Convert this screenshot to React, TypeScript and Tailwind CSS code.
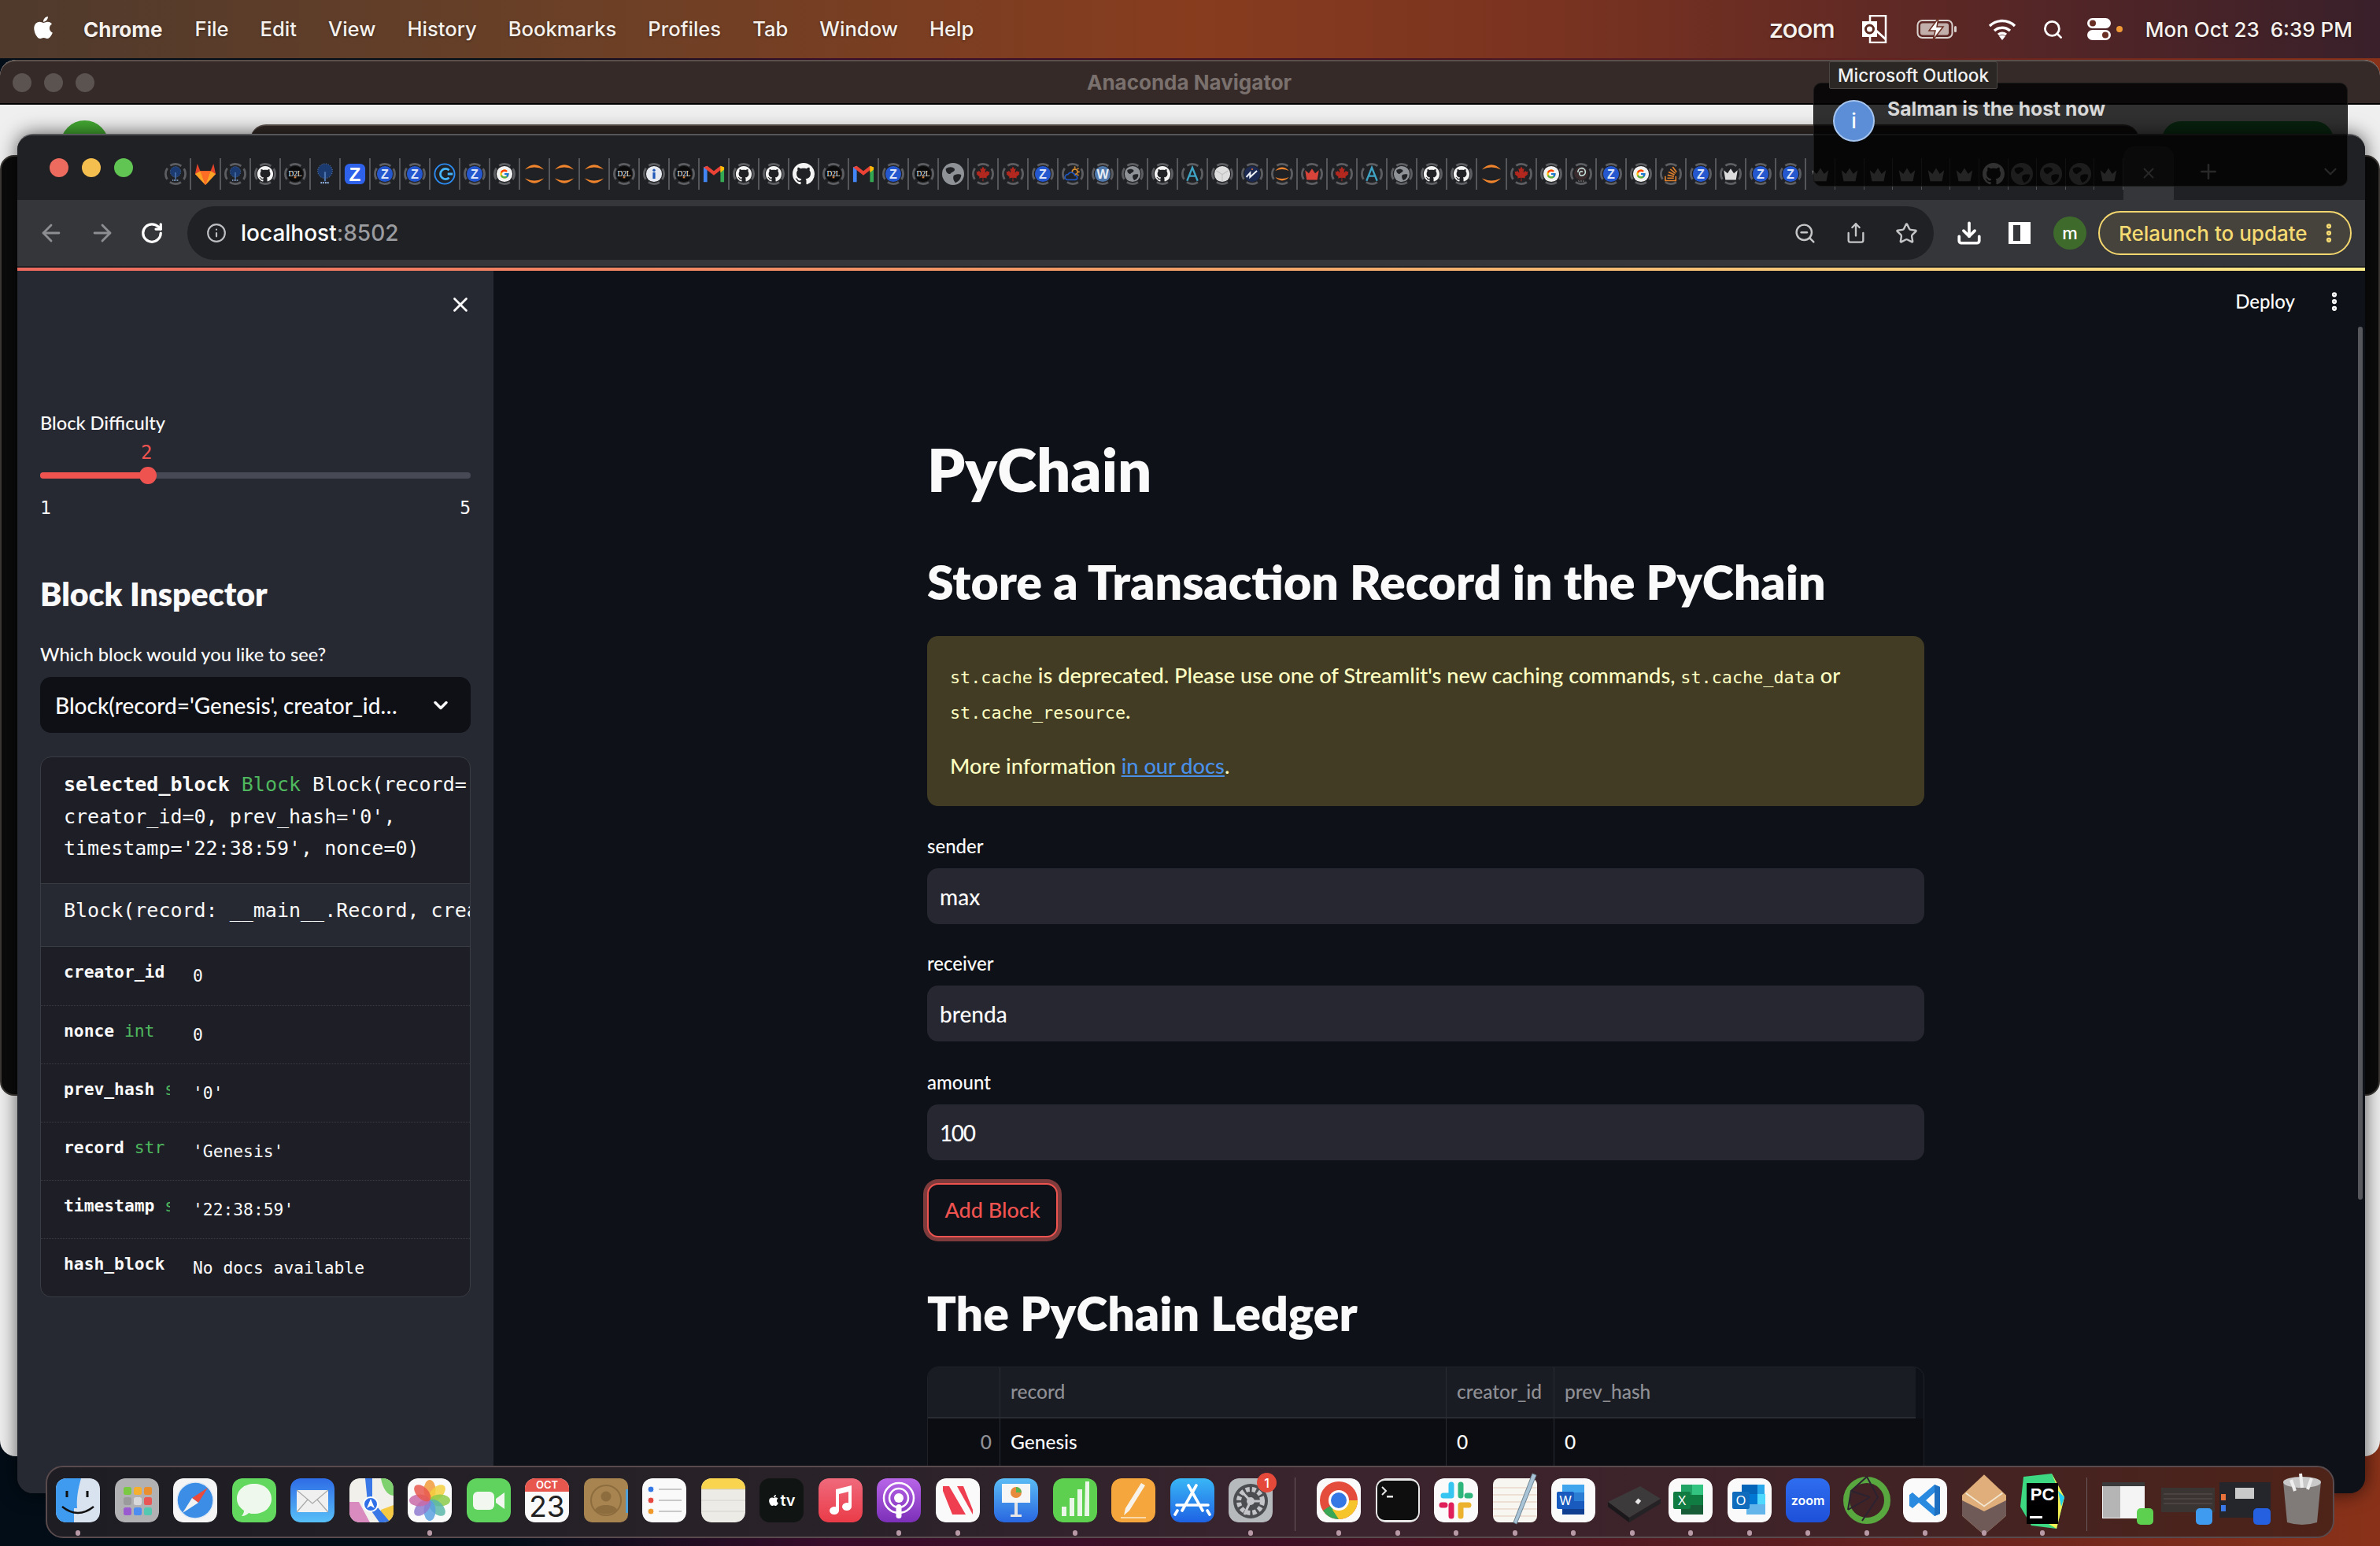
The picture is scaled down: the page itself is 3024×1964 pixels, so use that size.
import { FaApple, FaCanadianMapleLeaf } from "react-icons/fa";
import { FcGoogle } from "react-icons/fc";
import { SiStackoverflow } from "react-icons/si";
import {
  ArrowLeft,
  ArrowRight,
  ChevronDown,
  Download,
  EllipsisVertical,
  Info,
  Plus,
  RotateCw,
  Search,
  Share,
  Star,
  X,
  ZoomOut,
} from "lucide-react";

const GITHUB =
  "M8 0C3.58 0 0 3.58 0 8c0 3.54 2.29 6.53 5.47 7.59.4.07.55-.17.55-.38 0-.19-.01-.82-.01-1.49-2.01.37-2.53-.49-2.69-.94-.09-.23-.48-.94-.82-1.13-.28-.15-.68-.52-.01-.53.63-.01 1.08.58 1.23.82.72 1.21 1.87.87 2.33.66.07-.52.28-.87.51-1.07-1.78-.2-3.64-.89-3.64-3.95 0-.87.31-1.59.82-2.15-.08-.2-.36-1.02.08-2.12 0 0 .67-.21 2.2.82.64-.18 1.32-.27 2-.27.68 0 1.36.09 2 .27 1.53-1.04 2.2-.82 2.2-.82.44 1.1.16 1.92.08 2.12.51.56.82 1.27.82 2.15 0 3.07-1.87 3.75-3.65 3.95.29.25.54.73.54 1.48 0 1.07-.01 1.93-.01 2.2 0 .21.15.46.55.38A8.013 8.013 0 0016 8c0-4.42-3.58-8-8-8z";

const TABS =
  "tree* gitlab tree* github* d2l* tree zbig z* z* cal z* google* arcs arcs arcs d2l* info* d2l* gmail github* github* github d2l* gmail z* d2l* globe maple* maple* z* weather* w* globe* github* a* cube* n* arcs* crown* maple* a* globe* github* github* arcs maple* google* spiral* z* google* so* z* crownw* z* z*".split(
    " "
  );
const DIM_TABS = "crownd crownd crownd crownd crownd crownd github globe globe globe crownd".split(" ");

function FavShape({ kind }: { kind: string }) {
  switch (kind) {
    case "tree":
      return (
        <g>
          <circle cx="15" cy="11" r="10" fill="#1b3a70" />
          <circle cx="15" cy="11" r="10" fill="none" stroke="#6f97cf" strokeDasharray="1 2" />
          <path d="M15 12v13" stroke="#4a72ad" strokeWidth="2.4" />
          <path d="M9 27h12" stroke="#8fb0dc" strokeWidth="2.4" strokeDasharray="2 1" />
        </g>
      );
    case "gitlab":
      return (
        <g>
          <path d="M4 1l4 10h14l4-10 3 14-14 15L1 15z" fill="#e24329" />
          <path d="M8 11h14l-7 19z" fill="#fc6d26" />
          <path d="M1 15l14 15-7-19zM29 15L15 30l7-19z" fill="#fca326" />
        </g>
      );
    case "github":
      return <path d={GITHUB} transform="scale(1.875)" fill="#f4f4f4" />;
    case "d2l":
      return (
        <g>
          <circle cx="15" cy="15" r="15" fill="#0b0b0b" />
          <text x="15" y="20" textAnchor="middle" fontSize="14" fill="#f2f2f2" fontFamily="Liberation Serif, serif">
            D2L
          </text>
          <rect x="13" y="20" width="4" height="3" fill="#d07a35" />
        </g>
      );
    case "z":
      return (
        <g>
          <circle cx="15" cy="15" r="15" fill="#2557cf" />
          <text x="15" y="24" textAnchor="middle" fontSize="24" fontWeight="700" fill="#dfe6f7" fontFamily="Liberation Sans, sans-serif">
            Z
          </text>
        </g>
      );
    case "zbig":
      return (
        <g>
          <rect x="1" y="1" width="28" height="28" rx="7" fill="#2f62ea" />
          <text x="15" y="25" textAnchor="middle" fontSize="26" fontWeight="700" fill="#fff" fontFamily="Liberation Sans, sans-serif">
            Z
          </text>
        </g>
      );
    case "cal":
      return (
        <g fill="none" stroke="#2c8cf4">
          <circle cx="15" cy="15" r="13.5" strokeWidth="2" />
          <path d="M21 10a7 7 0 1 0 0 10M19 15h7" strokeWidth="3" stroke="#45b4fa" />
        </g>
      );
    case "google":
      return (
        <g>
          <circle cx="15" cy="15" r="15" fill="#f1f1f1" />
          <FcGoogle x={5} y={5} size={20} />
        </g>
      );
    case "arcs":
      return <path d="M2 9Q15-4 28 9 15 3 2 9zM2 21q13 6 26 0Q15 34 2 21z" fill="#f0852d" />;
    case "info":
      return (
        <g>
          <circle cx="15" cy="15" r="15" fill="#e6e9f0" />
          <circle cx="15" cy="8" r="2.6" fill="#1f57b8" />
          <rect x="12.6" y="12" width="4.8" height="12" fill="#1f57b8" />
        </g>
      );
    case "gmail":
      return (
        <g>
          <path d="M1 6l5-2v22H1z" fill="#4285f4" />
          <path d="M24 4l5 2v20h-5z" fill="#34a853" />
          <path d="M1 6l14 11L29 6l-5-2-9 7-9-7z" fill="#ea4335" />
          <path d="M24 4l5 2v3l-5 4z" fill="#fbbc04" />
        </g>
      );
    case "globe":
      return (
        <g>
          <circle cx="15" cy="15" r="15" fill="#8f9398" />
          <path d="M5 8c4-3 9-3 12 0 1 4-4 4-6 7-3 0-6-2-6-7zM16 17c4-2 8-2 10-1 0 5-3 9-8 11-2-3-4-6-2-10z" fill="#212226" />
        </g>
      );
    case "maple":
      return <FaCanadianMapleLeaf x={1} y={1} size={28} color="#b2281f" />;
    case "weather":
      return (
        <g fill="none" strokeWidth="2.5">
          <circle cx="19" cy="11" r="5" stroke="#e09230" />
          <path d="M19 1v3M28 11h-3M26 4l-2 2M26 18l-2-2" stroke="#e09230" />
          <path d="M5 26a5 5 0 0 1 1-10 7 7 0 0 1 13 2 4 4 0 0 1 1 8z" stroke="#1e56c0" fill="#202124" />
        </g>
      );
    case "w":
      return (
        <g>
          <circle cx="15" cy="15" r="15" fill="#5179ac" />
          <text x="15" y="24" textAnchor="middle" fontSize="24" fontWeight="700" fill="#e8eef6" fontFamily="Liberation Sans, sans-serif">
            W
          </text>
        </g>
      );
    case "a":
      return <path d="M5 28L15 3l10 25M9 19h12" fill="none" stroke="#3fa3c4" strokeWidth="3.5" />;
    case "cube":
      return (
        <g>
          <circle cx="15" cy="15" r="15" fill="#dedede" />
          <path d="M15 16L4 9M15 16l11-7M15 16v13" stroke="#bdbdbd" strokeWidth="1.5" />
        </g>
      );
    case "n":
      return (
        <g>
          <circle cx="15" cy="15" r="15" fill="#1c2a52" />
          <path d="M4 21l7-8v8l13-12" fill="none" stroke="#eef1f8" strokeWidth="3" />
          <circle cx="15" cy="6" r="1.6" fill="#e9703a" />
        </g>
      );
    case "crown":
      return <path d="M2 8l7 6 6-9 6 9 7-6-3 18H5z" fill="#d8443a" />;
    case "crownw":
      return <path d="M2 8l7 6 6-9 6 9 7-6-3 18H5z" fill="#dcdcdc" />;
    case "crownd":
      return <path d="M4 10l6 5 5-8 5 8 6-5-3 15H7z" fill="#b4b4b4" />;
    case "spiral":
      return (
        <g>
          <circle cx="15" cy="14" r="13" fill="#3a2c2e" />
          <path d="M9 12a7 7 0 1 1 8 6 4 4 0 1 1 1-7" fill="none" stroke="#c6e0dc" strokeWidth="2.4" />
          <path d="M10 27l1 3M15 27v3M20 27l-1 3" stroke="#8a8a8a" strokeWidth="1.5" />
        </g>
      );
    case "so":
      return <SiStackoverflow x={1} y={1} size={28} color="#e0802c" />;
    default:
      return null;
  }
}

function Favicon({ name }: { name: string }) {
  const ring = name.endsWith("*");
  const kind = ring ? name.slice(0, -1) : name;
  return (
    <svg width="28" height="30" viewBox="0 0 30 30">
      {ring ? (
        <>
          <circle cx="15" cy="15" r="13.5" fill="none" stroke="#5d5e62" strokeWidth="3" strokeDasharray="16 5.2" strokeDashoffset="8" />
          <g transform="translate(15 15) scale(.72) translate(-15 -15)">
            <FavShape kind={kind} />
          </g>
        </>
      ) : (
        <FavShape kind={kind} />
      )}
    </svg>
  );
}

function MenuBar() {
  const items = ["File", "Edit", "View", "History", "Bookmarks", "Profiles", "Tab", "Window", "Help"];
  return (
    <div className="relative z-10 flex h-[74px] items-center pl-[39px] pr-[35px] text-[26px] text-[#f6f1ec] [font-family:Inter,sans-serif] bg-[linear-gradient(90deg,#4f3a2c_0%,#6c4026_25%,#873c1e_50%,#7a3320_65%,#5b2725_82%,#39202a_100%)] [text-shadow:0_1px_3px_rgba(0,0,0,.45)]">
      <FaApple size={32} className="mb-1 text-white" />
      <span className="ml-[35px] font-bold">Chrome</span>
      <div className="ml-[41px] flex gap-[40px] text-[25.6px]">
        {items.map((m) => (
          <span key={m}>{m}</span>
        ))}
      </div>
      <div className="ml-auto flex items-center">
        <span className="text-[33px] font-medium tracking-[-0.03em]">zoom</span>
        <svg width="34" height="36" viewBox="0 0 34 36" className="ml-[33px]">
          <path d="M12 1h20v34H12z" fill="none" stroke="#fff" strokeWidth="2.5" />
          <rect x="2" y="8" width="19" height="20" fill="#fff" />
          <circle cx="11.5" cy="18" r="5" fill="none" stroke="#5a2a20" strokeWidth="3" />
          <path d="M20 20l12 11" stroke="#fff" strokeWidth="3" />
        </svg>
        <svg width="52" height="28" viewBox="0 0 52 28" className="ml-[37px]">
          <rect x="1.5" y="3" width="44" height="22" rx="6" fill="none" stroke="#d9d2ce" strokeWidth="2" />
          <rect x="5" y="6.5" width="36" height="15" rx="3" fill="#e4dcd8" opacity=".75" />
          <path d="M28 0L16 16h8l-3 12 13-17h-8z" fill="#fff" stroke="#6a2f24" strokeWidth="1.5" />
          <rect x="48" y="10" width="3" height="8" rx="1.5" fill="#d9d2ce" />
        </svg>
        <svg width="36" height="28" viewBox="0 0 36 28" className="ml-[39px]">
          <path d="M2 10a23 23 0 0 1 32 0M8 16a15 15 0 0 1 20 0M13 21a8 8 0 0 1 10 0" fill="none" stroke="#fff" strokeWidth="3.4" />
          <path d="M18 28l-4-5a6 6 0 0 1 8 0z" fill="#fff" />
        </svg>
        <Search size={27} strokeWidth={2.5} className="ml-[33px] text-white" />
        <svg width="32" height="30" viewBox="0 0 32 30" className="ml-[29px]">
          <rect x="1" y="1" width="30" height="13" rx="6.5" fill="#fff" />
          <circle cx="8" cy="7.5" r="4" fill="#6a2f24" />
          <rect x="1" y="16" width="30" height="13" rx="6.5" fill="#fff" />
          <circle cx="24" cy="22.5" r="4" fill="#6a2f24" />
        </svg>
        <span className="ml-[6px] h-2 w-2 rounded-full bg-[#f09a37]" />
        <span className="ml-[29px] whitespace-pre">Mon Oct 23  6:39 PM</span>
      </div>
    </div>
  );
}

function TabStrip() {
  return (
    <div className="flex h-[82px] shrink-0 bg-[#202124]">
      <div className="flex min-w-0 flex-1 rounded-br-[14px]">
        <div className="flex w-[185px] gap-[17px] pl-[41px] pt-[29px]">
          <span className="h-[24px] w-[24px] rounded-full bg-[#ec6a5e]" />
          <span className="h-[24px] w-[24px] rounded-full bg-[#f4bf4f]" />
          <span className="h-[24px] w-[24px] rounded-full bg-[#61c554]" />
        </div>
        <div className="flex pt-[29px]">
          {TABS.map((t, i) => (
            <div key={i} className="flex h-[40px] w-[38px] items-center justify-center border-r-2 border-[#55565a]">
              <Favicon name={t} />
            </div>
          ))}
          {DIM_TABS.map((t, i) => (
            <div key={i} className="flex h-[40px] w-[36.6px] items-center justify-center border-r border-[#55565a]">
              <Favicon name={t} />
            </div>
          ))}
        </div>
      </div>
      <div className="mt-[14px] flex w-[64px] items-center justify-center rounded-t-[14px] bg-[#35363a]">
        <X size={22} className="text-[#c5c6c8]" />
      </div>
      <div className="flex w-[243px] items-center justify-between pl-[29px] pr-[31px] pt-[10px]">
        <Plus size={30} className="text-[#c5c6c8]" />
        <ChevronDown size={26} className="text-[#c5c6c8]" />
      </div>
    </div>
  );
}

function Toolbar() {
  return (
    <div className="flex h-[84px] shrink-0 items-center bg-[#35363a] [font-family:Inter,sans-serif]">
      <div className="flex w-[216px] items-center gap-[31px] pl-[26px] text-[#8d8e92]">
        <ArrowLeft size={34} strokeWidth={2} />
        <ArrowRight size={34} strokeWidth={2} />
        <RotateCw size={30} strokeWidth={2.6} className="text-white" />
      </div>
      <div className="flex h-[68px] w-[2219px] items-center rounded-full bg-[#202124] pl-[24px] pr-[20px]">
        <Info size={26} className="text-[#bdbec2]" />
        <span className="ml-[18px] text-[28px] text-white">
          localhost<span className="text-[#9b9ca0]">:8502</span>
        </span>
        <div className="ml-auto flex items-center gap-[36px] text-[#c5c6c8]">
          <ZoomOut size={29} strokeWidth={2} />
          <Share size={28} strokeWidth={2} />
          <Star size={29} strokeWidth={2} />
        </div>
      </div>
      <Download size={34} strokeWidth={2.6} className="ml-[28px] text-white" />
      <svg width="28" height="28" viewBox="0 0 28 28" className="ml-[33px]">
        <rect width="28" height="28" fill="#fff" />
        <rect x="6" y="4" width="9" height="20" fill="#35363a" />
      </svg>
      <span className="ml-[29px] flex h-[42px] w-[42px] items-center justify-center rounded-full bg-[#3e6b2c] text-[22px] text-white">m</span>
      <div className="ml-[15px] flex h-[56px] w-[322px] items-center rounded-full border-2 border-[#f4d76e] bg-[#45433c] pl-[24px] pr-[12px] text-[26px] text-[#f6da72]">
        <span className="whitespace-nowrap">Relaunch to update</span>
        <EllipsisVertical size={30} strokeWidth={3} className="ml-auto" />
      </div>
    </div>
  );
}

const rows = [
  { name: "creator_id", type: "int", value: "0" },
  { name: "nonce", type: "int", value: "0" },
  { name: "prev_hash", type: "str", value: "'0'" },
  { name: "record", type: "str", value: "'Genesis'" },
  { name: "timestamp", type: "str", value: "'22:38:59'" },
  { name: "hash_block", type: "", value: "No docs available" },
];

function Sidebar() {
  return (
    <div className="flex w-[605px] shrink-0 flex-col bg-[#272932] px-[29px] text-[#fafafa]">
      <div className="flex h-[84px] items-start justify-end pt-[28px]">
        <X size={30} strokeWidth={2.2} className="mr-[-2px]" />
      </div>
      <div className="mt-[94px] flex h-[32px] items-center text-[23.6px]">Block Difficulty</div>
      <div className="mt-[9px] h-[24px] pl-[128px] text-[24px] leading-[24px] text-[#ef5350] [font-family:'DejaVu_Sans_Mono',monospace]">2</div>
      <div className="relative mt-[13px] h-[8px] rounded-full bg-[#474954]">
        <div className="h-[8px] w-[136px] rounded-full bg-[#ef5350]" />
        <span className="absolute left-[126px] top-[-7px] h-[22px] w-[22px] rounded-full bg-[#ef5350]" />
      </div>
      <div className="mt-[25px] flex h-[24px] justify-between text-[23px] leading-[24px] [font-family:'DejaVu_Sans_Mono',monospace]">
        <span>1</span>
        <span>5</span>
      </div>
      <h2 className="mt-[74px] h-[48px] text-[41px] font-extrabold leading-[48px]">Block Inspector</h2>
      <div className="mt-[37px] flex h-[32px] items-center text-[23.6px]">Which block would you like to see?</div>
      <div className="mt-[12px] flex h-[71px] items-center justify-between rounded-[14px] bg-[#0e1016] pl-[19px] pr-[24px] text-[28px]">
        <span>Block(record='Genesis', creator_id…</span>
        <ChevronDown size={28} strokeWidth={3} />
      </div>
      <div className="mt-[30px] overflow-hidden rounded-[14px] border border-[#3a3c44] bg-[#1e1f26] font-normal [font-family:'DejaVu_Sans_Mono',monospace]">
        <div className="h-[160px] overflow-hidden whitespace-pre pl-[29px] pt-[15px] text-[25px] leading-[40.5px]">
          <div>
            <b>selected_block</b> <span className="text-[#4fb85e]">Block</span> Block(record='Genesis',
          </div>
          <div>creator_id=0, prev_hash='0',</div>
          <div>timestamp='22:38:59', nonce=0)</div>
        </div>
        <div className="h-[81px] overflow-hidden whitespace-pre border-y border-[#3a3c44] bg-[#272932] pl-[29px] pt-[14px] text-[25px] leading-[40px]">
          Block(record: __main__.Record, creator_id: int, prev_hash: str = '0')
        </div>
        {rows.map((r, i) => (
          <div key={r.name} className={"flex h-[74px] pl-[29px] text-[21.3px] " + (i ? "border-t border-dotted border-[#3a3c44]" : "")}>
            <div className="mt-[16px] h-[30px] w-[135px] overflow-hidden whitespace-pre font-bold">
              {r.name} <span className="font-normal text-[#4fb85e]">{r.type}</span>
            </div>
            <div className="ml-[29px] mt-[21px] whitespace-pre">{r.value}</div>
          </div>
        ))}
      </div>
    </div>
  );
}

function Field({ label, value, mt, valueClass }: { label: string; value: string; mt: string; valueClass?: string }) {
  return (
    <div className={mt}>
      <div className="flex h-[32px] items-center text-[24px] text-[#fafafa]">{label}</div>
      <div className={"mt-[12px] flex h-[71px] items-center rounded-[14px] bg-[#262730] pl-[16px] text-[28px] text-[#fafafa] " + (valueClass ?? "")}>{value}</div>
    </div>
  );
}

const codeClass = "text-[21.8px] leading-none font-normal [font-family:'DejaVu_Sans_Mono',monospace]";

function MainPanel() {
  return (
    <div className="relative flex-1 bg-[#0e1117]">
      <div className="absolute right-[3px] top-[71px] h-[1109px] w-[6px] rounded-full bg-[#55575d]" />
      <div className="flex h-[78px] items-center justify-end pr-[24px] text-[24px] text-[#fafafa]">
        <span>Deploy</span>
        <EllipsisVertical size={30} strokeWidth={3} className="ml-[35px]" />
      </div>
      <div className="ml-[551px] w-[1267px]">
        <h1 className="mt-[134px] h-[80px] text-[76px] font-extrabold leading-[80px] text-[#fafafa]">PyChain</h1>
        <h2 className="mt-[63px] h-[80px] text-[60.8px] font-extrabold leading-[80px] text-[#fafafa]">Store a Transaction Record in the PyChain</h2>
        <div className="mt-[29px] h-[216px] rounded-[14px] bg-[#413c23] px-[29px] pt-[27px] text-[27.2px] text-[#ffffc2]">
          <div className="leading-[45px]">
            <code className={codeClass}>st.cache</code> is deprecated. Please use one of Streamlit's new caching commands,{" "}
            <code className={codeClass}>st.cache_data</code> or <code className={codeClass}>st.cache_resource</code>.
          </div>
          <div className="mt-[25px] leading-[46px]">
            More information{" "}
            <a href="#docs" className="text-[#4a90e8] underline">
              in our docs
            </a>
            .
          </div>
        </div>
        <Field mt="mt-[35px]" label="sender" value="max" />
        <Field mt="mt-[34px]" label="receiver" value="brenda" />
        <Field mt="mt-[36px]" label="amount" value="100" valueClass="tracking-[-0.05em]" />
        <button className="mt-[29px] h-[69px] w-[166px] rounded-[14px] border-2 border-[#ef5350] bg-[#0e1117] text-[27px] text-[#ef5350] shadow-[0_0_0_5px_#7f3b3b]">
          Add Block
        </button>
        <h2 className="mt-[56px] h-[80px] text-[60.8px] font-extrabold leading-[80px] text-[#fafafa]">The PyChain Ledger</h2>
        <div className="mt-[28px] overflow-hidden rounded-t-[14px] border border-[#1f2127] text-[24.5px]">
          <div className="mr-[10px] flex h-[65px] border-b-2 border-[#2a2c33] bg-[#1a1c23] text-[#8f9096]">
            <div className="w-[92px] border-r border-[#2a2c33]" />
            <div className="flex w-[567px] items-center border-r border-[#2a2c33] pl-[13px]">record</div>
            <div className="flex w-[137px] items-center border-r border-[#2a2c33] pl-[13px]">creator_id</div>
            <div className="flex flex-1 items-center pl-[13px]">prev_hash</div>
          </div>
          <div className="flex h-[95px] bg-[#0b0d12] text-[#fafafa]">
            <div className="flex w-[92px] items-start justify-end border-r border-[#2a2c33] pr-[10px] pt-[12px] text-[#8f9096]">0</div>
            <div className="w-[567px] border-r border-[#2a2c33] pl-[13px] pt-[12px]">Genesis</div>
            <div className="w-[137px] border-r border-[#2a2c33] pl-[13px] pt-[12px]">0</div>
            <div className="flex-1 pl-[13px] pt-[12px]">0</div>
          </div>
        </div>
      </div>
    </div>
  );
}

function DockGlyph({ name }: { name: string }) {
  switch (name) {
    case "finder":
      return (
        <svg viewBox="0 0 56 56">
          <rect width="56" height="56" rx="12" fill="#d9e2ef" />
          <path d="M12 0h20c-4 14-6 26-5 38h-4v18H12Q0 56 0 44V12Q0 0 12 0z" fill="#3f9bef" />
          <path d="M14 16v8M40 16v8" stroke="#111" strokeWidth="3" />
          <path d="M8 36q20 16 40 0" fill="none" stroke="#111" strokeWidth="2.5" />
        </svg>
      );
    case "launchpad":
      return (
        <svg viewBox="0 0 56 56">
          <rect width="56" height="56" rx="12" fill="#b1b1b3" />
          {["#7ac943", "#f5b02f", "#e98f2f", "#9a9a9c", "#d8d8da", "#e85656", "#9b5bd0", "#4d8cf0", "#54c8b0"].map((c, i) => (
            <rect key={i} x={11 + (i % 3) * 13} y={11 + Math.floor(i / 3) * 13} width="10" height="10" rx="2.5" fill={c} />
          ))}
        </svg>
      );
    case "safari":
      return (
        <svg viewBox="0 0 56 56">
          <rect width="56" height="56" rx="12" fill="#f5f5f5" />
          <circle cx="28" cy="28" r="23" fill="#3b8de5" stroke="#dfe9f5" strokeWidth="1.5" />
          <path d="M44 12L24 25l8 6z" fill="#ea4b3c" />
          <path d="M12 44l12-19 8 6z" fill="#f2f2f2" />
        </svg>
      );
    case "messages":
      return (
        <svg viewBox="0 0 56 56">
          <rect width="56" height="56" rx="12" fill="#63d85f" />
          <path d="M28 8c13 0 22 8 22 19s-9 19-22 19c-3 0-5 0-7-1-2 2-5 4-9 4 2-2 3-5 3-7C9 38 6 33 6 27 6 16 15 8 28 8z" fill="#eef8ec" transform="translate(0 -1)" />
        </svg>
      );
    case "mail":
      return (
        <svg viewBox="0 0 56 56">
          <defs>
            <linearGradient id="mailg" x1="0" y1="0" x2="0" y2="1">
              <stop stopColor="#2e6ce6" />
              <stop offset="1" stopColor="#58c0f8" />
            </linearGradient>
          </defs>
          <rect width="56" height="56" rx="12" fill="url(#mailg)" />
          <rect x="8" y="15" width="40" height="28" rx="2" fill="#f0f0f0" />
          <path d="M8 15l20 17 20-17M8 43l14-16M48 43L34 27" fill="none" stroke="#a9a9a9" strokeWidth="1.2" />
        </svg>
      );
    case "maps":
      return (
        <svg viewBox="0 0 56 56">
          <rect width="56" height="56" rx="12" fill="#f2f0ea" />
          <path d="M0 30h12l14 26H12Q0 56 0 44z" fill="#d98bc0" />
          <path d="M40 40l16-6v10q0 12-12 12h-4z" fill="#f6c944" />
          <path d="M40 0h4q12 0 12 12v10C48 22 42 12 40 0z" fill="#7fd16f" />
          <path d="M20 0h9v30h-6zM30 30L52 56H38L24 36z" fill="#3a78e8" />
          <circle cx="27" cy="33" r="9" fill="#2f6fe8" stroke="#fff" strokeWidth="2" />
          <path d="M27 26l5 12-5-3-5 3z" fill="#fff" />
        </svg>
      );
    case "photos":
      return (
        <svg viewBox="0 0 56 56">
          <rect width="56" height="56" rx="12" fill="#fafafa" />
          {["#f29a38", "#f3cf3d", "#8ccb4a", "#5cb6a8", "#5aa0e0", "#8f7ad0", "#c86aa8", "#e8584e"].map((c, i) => (
            <ellipse key={i} cx="28" cy="15" rx="7.5" ry="13" fill={c} opacity=".85" transform={`rotate(${i * 45} 28 28)`} />
          ))}
        </svg>
      );
    case "facetime":
      return (
        <svg viewBox="0 0 56 56">
          <rect width="56" height="56" rx="12" fill="#5fd35d" />
          <rect x="8" y="17" width="27" height="23" rx="6" fill="#f2f7f0" />
          <path d="M37 26l11-8v21l-11-8z" fill="#f2f7f0" />
        </svg>
      );
    case "calendar":
      return (
        <div className="flex h-full flex-col bg-[#fafafa] text-center font-normal [font-family:Inter,sans-serif]">
          <div className="h-[17px] bg-[#e8574e] text-[13px] font-semibold leading-[17px] text-white">OCT</div>
          <div className="text-[37px] leading-[38px] text-[#222]">23</div>
        </div>
      );
    case "contacts":
      return (
        <svg viewBox="0 0 56 56">
          <rect width="56" height="56" rx="10" fill="#a88450" />
          <rect x="53" y="14" width="3" height="30" fill="#4fa0d8" />
          <circle cx="28" cy="28" r="19" fill="none" stroke="#8d6c3e" strokeWidth="2" />
          <circle cx="28" cy="23" r="6.5" fill="#8d6c3e" />
          <path d="M14 40c3-8 25-8 28 0-6 7-22 7-28 0z" fill="#8d6c3e" />
        </svg>
      );
    case "reminders":
      return (
        <svg viewBox="0 0 56 56">
          <rect width="56" height="56" rx="12" fill="#fafafa" />
          {[
            ["#3478e5", 14],
            ["#e6483f", 28],
            ["#f09a2c", 42],
          ].map(([c, y]) => (
            <g key={String(c)}>
              <circle cx="11" cy={Number(y)} r="4" fill={String(c)} stroke="#f8f8f8" />
              <rect x="21" y={Number(y) - 1} width="29" height="2" fill="#c9c9c9" />
            </g>
          ))}
        </svg>
      );
    case "notes":
      return (
        <svg viewBox="0 0 56 56">
          <rect width="56" height="56" rx="12" fill="#ecebe6" />
          <path d="M0 14V12Q0 0 12 0h32q12 0 12 12v2z" fill="#f9d44f" />
          <path d="M0 14h56M0 28h56M0 42h56" stroke="#d4d3cd" />
        </svg>
      );
    case "tv":
      return (
        <div className="flex h-full items-center justify-center bg-[#101412] text-[20px] font-semibold text-white [font-family:Inter,sans-serif]">
          <FaApple size={16} />
          tv
        </div>
      );
    case "music":
      return (
        <svg viewBox="0 0 56 56">
          <defs>
            <linearGradient id="musicg" x1="0" y1="0" x2="0" y2="1">
              <stop stopColor="#f06a7c" />
              <stop offset="1" stopColor="#ea3b48" />
            </linearGradient>
          </defs>
          <rect width="56" height="56" rx="12" fill="url(#musicg)" />
          <path d="M22 14l20-5v27a6 5 0 1 1-4-4.700V17l-12 3v21a6 5 0 1 1-4-4.700z" fill="#fff" />
        </svg>
      );
    case "podcasts":
      return (
        <svg viewBox="0 0 56 56">
          <defs>
            <linearGradient id="podg" x1="0" y1="0" x2="0" y2="1">
              <stop stopColor="#b865e8" />
              <stop offset="1" stopColor="#7c2fb8" />
            </linearGradient>
          </defs>
          <rect width="56" height="56" rx="12" fill="url(#podg)" />
          <circle cx="28" cy="25" r="19" fill="none" stroke="#fff" strokeWidth="2.5" />
          <circle cx="28" cy="25" r="12" fill="none" stroke="#fff" strokeWidth="2.5" />
          <circle cx="28" cy="25" r="6" fill="#fff" />
          <rect x="24.500" y="33" width="7" height="18" rx="3.500" fill="#fff" />
        </svg>
      );
    case "news":
      return (
        <svg viewBox="0 0 56 56">
          <rect width="56" height="56" rx="12" fill="#fafafa" />
          <path d="M9 10h26l12 30v6H21L9 16z" fill="#ef3e4f" />
          <path d="M17 10h10l20 36H38z" fill="#fafafa" />
        </svg>
      );
    case "keynote":
      return (
        <svg viewBox="0 0 56 56">
          <defs>
            <linearGradient id="keyg" x1="0" y1="0" x2="0" y2="1">
              <stop stopColor="#5bbcf5" />
              <stop offset="1" stopColor="#2866e0" />
            </linearGradient>
          </defs>
          <rect width="56" height="56" rx="12" fill="url(#keyg)" />
          <rect x="10" y="7" width="36" height="24" fill="#f6f6f6" />
          <circle cx="28" cy="18" r="7" fill="#e78a3c" />
          <path d="M28 18V11a7 7 0 0 1 7 7z" fill="#59b34f" />
          <path d="M26 31h4v15h-4zM21 46h14v3H21z" fill="#e6e6e6" />
        </svg>
      );
    case "numbers":
      return (
        <svg viewBox="0 0 56 56">
          <rect width="56" height="56" rx="12" fill="#5dd14f" />
          <path d="M11 36h6v12h-6zM21 25h6v23h-6zM31 14h6v34h-6zM41 4h-1 6v44h-6z" fill="#eaf6e8" />
        </svg>
      );
    case "pages":
      return (
        <svg viewBox="0 0 56 56">
          <rect width="56" height="56" rx="12" fill="#f5a63c" />
          <path d="M38 6l5 3-20 32-7 6 2-9z" fill="#f7f3ea" />
          <rect x="12" y="49" width="32" height="2" fill="#f9d9a7" />
        </svg>
      );
    case "appstore":
      return (
        <svg viewBox="0 0 56 56">
          <defs>
            <linearGradient id="appg" x1="0" y1="0" x2="0" y2="1">
              <stop stopColor="#39b6f6" />
              <stop offset="1" stopColor="#1e62e4" />
            </linearGradient>
          </defs>
          <rect width="56" height="56" rx="12" fill="url(#appg)" />
          <path d="M33 9L15 41M23 9l18 32M8 34h40M6 46l3-5M50 46l-3-5" fill="none" stroke="#fff" strokeWidth="3.6" strokeLinecap="round" />
        </svg>
      );
    case "prefs":
      return (
        <svg viewBox="0 0 56 56">
          <rect width="56" height="56" rx="12" fill="#b6babd" />
          <circle cx="28" cy="29" r="22" fill="#4b4d50" />
          <circle cx="28" cy="29" r="15" fill="none" stroke="#c3c5c8" strokeWidth="6" strokeDasharray="5 3" />
          <circle cx="28" cy="29" r="5" fill="#c3c5c8" />
          <path d="M28 29L16 16M28 29h18M28 29L20 46" stroke="#c3c5c8" strokeWidth="3" />
        </svg>
      );
    case "chrome":
      return (
        <svg viewBox="0 0 56 56">
          <rect width="56" height="56" rx="12" fill="#fafafa" />
          <circle cx="28" cy="28" r="24" fill="#e44c3c" />
          <path d="M28 28L8 41A24 24 0 0 0 28 52z" fill="#3aa757" />
          <path d="M28 28h24a24 24 0 0 1-24 24L20 40z" fill="#f6c42b" />
          <circle cx="28" cy="28" r="11.500" fill="#3478e5" stroke="#fff" strokeWidth="3" />
        </svg>
      );
    case "terminal":
      return (
        <svg viewBox="0 0 56 56">
          <rect width="56" height="56" rx="12" fill="#e8e8e8" />
          <rect x="2" y="3" width="52" height="50" rx="9" fill="#0e0e0e" />
          <path d="M8 11l5 5-5 5" fill="none" stroke="#e8e8e8" strokeWidth="2" />
          <rect x="14" y="22" width="8" height="2.500" fill="#e8e8e8" />
        </svg>
      );
    case "slack":
      return (
        <svg viewBox="0 0 56 56">
          <rect width="56" height="56" rx="12" fill="#fafafa" />
          <path d="M22 8v14H12" fill="none" stroke="#36c5f0" strokeWidth="7" strokeLinecap="round" strokeLinejoin="round" />
          <path d="M34 8v14" stroke="#2eb67d" strokeWidth="7" strokeLinecap="round" />
          <path d="M46 22h-4" stroke="#2eb67d" strokeWidth="7" strokeLinecap="round" />
          <path d="M34 48V34h10" fill="none" stroke="#ecb22e" strokeWidth="7" strokeLinecap="round" strokeLinejoin="round" />
          <path d="M22 34v14M10 34h4" stroke="#e01e5a" strokeWidth="7" strokeLinecap="round" />
        </svg>
      );
    case "textedit":
      return (
        <svg viewBox="0 0 56 56" className="overflow-visible">
          <rect width="56" height="56" rx="8" fill="#f8f6f0" />
          <path d="M0 12h56M0 21h56M0 30h56M0 39h56M0 48h56" stroke="#e2c9b8" />
          <path d="M50-6l5 2-25 62-4-2z" fill="#a9c4d6" stroke="#6c8494" />
        </svg>
      );
    case "word":
      return (
        <svg viewBox="0 0 56 56">
          <rect width="56" height="56" rx="12" fill="#fafafa" />
          <path d="M14 8h28v10H14z" fill="#41a5ee" />
          <path d="M14 18h28v11H14z" fill="#2b7cd3" />
          <path d="M14 29h28v10H14z" fill="#185abd" />
          <path d="M14 39h28v7H14z" fill="#103f91" />
          <rect x="7" y="17" width="22" height="22" rx="2" fill="#185abd" />
          <text x="18" y="34" textAnchor="middle" fontSize="16" fill="#fff" fontFamily="Liberation Sans, sans-serif">
            W
          </text>
        </svg>
      );
    case "wallet":
      return (
        <svg viewBox="0 0 56 56" className="overflow-visible">
          <path d="M-3 30L38 10l26 16-40 24z" fill="#3d3a3b" />
          <path d="M-3 30L24 50v6L-3 36z" fill="#1a181a" />
          <path d="M24 50l40-24v6L24 56z" fill="#242224" />
          <rect x="33" y="26" width="5" height="6" fill="#e8e8e8" transform="rotate(40 35 29)" />
        </svg>
      );
    case "excel":
      return (
        <svg viewBox="0 0 56 56">
          <rect width="56" height="56" rx="12" fill="#fafafa" />
          <path d="M16 8h14v13H16z" fill="#21a366" />
          <path d="M30 8h14v13H30z" fill="#33c481" />
          <path d="M16 21h28v13H16z" fill="#107c41" />
          <path d="M16 34h28v12H16z" fill="#185c37" />
          <rect x="6" y="17" width="22" height="22" rx="2" fill="#107c41" />
          <text x="17" y="34" textAnchor="middle" fontSize="16" fill="#fff" fontFamily="Liberation Sans, sans-serif">
            X
          </text>
        </svg>
      );
    case "outlook":
      return (
        <svg viewBox="0 0 56 56">
          <rect width="56" height="56" rx="12" fill="#fafafa" />
          <path d="M18 8h20v12H18z" fill="#0364b8" />
          <path d="M38 8h9v12h-9z" fill="#28a8ea" />
          <path d="M18 20h20v13H18z" fill="#0078d4" />
          <path d="M38 20h10v13H38z" fill="#50d9ff" />
          <path d="M24 33h24v13H24z" fill="#64b5ea" />
          <rect x="6" y="17" width="22" height="22" rx="2" fill="#0f6cbd" />
          <text x="17" y="34" textAnchor="middle" fontSize="16" fill="#fff" fontFamily="Liberation Sans, sans-serif">
            O
          </text>
        </svg>
      );
    case "zoom":
      return (
        <div className="flex h-full items-center justify-center bg-[linear-gradient(#2e6df0,#1e50d8)] text-[16px] font-semibold text-white [font-family:Inter,sans-serif]">
          zoom
        </div>
      );
    case "anaconda":
      return (
        <svg viewBox="0 0 56 56" className="overflow-visible">
          <circle cx="28" cy="28" r="26" fill="none" stroke="#58a83f" strokeWidth="8" />
          <path d="M28-2L8 16 4 40M28-2l14 26-20 30M8 16l24 8M4 40l28-16" fill="none" stroke="#2c2230" strokeWidth="2" />
        </svg>
      );
    case "vscode":
      return (
        <svg viewBox="0 0 56 56">
          <rect width="56" height="56" rx="12" fill="#fafafa" />
          <path d="M40 8l7 3v34l-7 3-20-17-8 7-4-3v-14l4-3 8 7zm0 10l-11 10 11 10z" fill="#2a8ae0" />
          <path d="M40 8l7 3v34l-7 3z" fill="#1f6fc0" />
        </svg>
      );
    case "sketch":
      return (
        <svg viewBox="0 0 60 70" className="overflow-visible">
          <path d="M30-5l30 28v28L30 77 0 51V23z" fill="#dfae7a" />
          <path d="M0 30l30 15 30-15v21L30 77 0 51z" fill="#6f5a58" />
          <path d="M5 20l25 18 25-18" fill="none" stroke="#f2e7d2" strokeWidth="2" />
        </svg>
      );
    case "pycharm":
      return (
        <svg viewBox="0 0 56 64" className="overflow-visible">
          <path d="M4-2L40-6l16 30-10 40-32-4L0 36z" fill="#3cd882" />
          <path d="M40-6l16 30-10 40-10-6 12-44z" fill="#f3ee52" />
          <path d="M48 16l8 8-4 12z" fill="#21d0f0" />
          <rect x="8" y="6" width="40" height="52" fill="#000" />
          <text x="28" y="28" textAnchor="middle" fontSize="22" fontWeight="700" fill="#fff" fontFamily="Liberation Sans, sans-serif">
            PC
          </text>
          <rect x="12" y="48" width="16" height="3" fill="#fff" />
        </svg>
      );
    case "mini1":
      return (
        <svg viewBox="0 0 56 56" className="overflow-visible">
          <rect x="0" y="5" width="54" height="46" fill="#f4f4f4" />
          <rect x="0" y="5" width="54" height="5" fill="#3a3a3a" />
          <rect x="1" y="10" width="22" height="40" fill="#b5b5b5" />
          <rect x="44" y="38" width="21" height="21" rx="5" fill="#5dd14f" />
        </svg>
      );
    case "mini2":
      return (
        <svg viewBox="0 0 56 56" className="overflow-visible">
          <rect x="0" y="12" width="68" height="31" fill="#3a3533" />
          <path d="M3 20h62M3 26h62M3 32h62" stroke="#5a5350" />
          <rect x="44" y="38" width="21" height="21" rx="5" fill="#3f9bef" />
        </svg>
      );
    case "mini3":
      return (
        <svg viewBox="0 0 56 56" className="overflow-visible">
          <rect x="0" y="5" width="65" height="45" fill="#25262c" />
          <rect x="2" y="20" width="6" height="8" fill="#e8703a" />
          <rect x="20" y="12" width="24" height="14" fill="#c9c9c9" />
          <rect x="2" y="34" width="6" height="8" fill="#3a78e8" />
          <rect x="43" y="38" width="22" height="21" rx="5" fill="#2460e0" />
        </svg>
      );
    case "trash":
      return (
        <svg viewBox="0 0 56 64" className="overflow-visible">
          <path d="M4 4h48l-5 52q-19 6-38 0z" fill="#8a8a8a" opacity=".85" />
          <ellipse cx="28" cy="5" rx="24" ry="7" fill="#c9c9c9" />
          <path d="M14 2l5 14M26-6l2 18M40 0l-5 14" stroke="#eeeeee" strokeWidth="4" />
        </svg>
      );
    default:
      return null;
  }
}

const DOCK_LEFT = [
  ["finder", 1],
  ["launchpad", 0],
  ["safari", 0],
  ["messages", 0],
  ["mail", 0],
  ["maps", 0],
  ["photos", 1],
  ["facetime", 0],
  ["calendar", 0],
  ["contacts", 0],
  ["reminders", 0],
  ["notes", 0],
  ["tv", 0],
  ["music", 0],
  ["podcasts", 1],
  ["news", 1],
  ["keynote", 0],
  ["numbers", 1],
  ["pages", 0],
  ["appstore", 0],
  ["prefs", 1],
] as const;
const DOCK_APPS = ["chrome", "terminal", "slack", "textedit", "word", "wallet", "excel", "outlook", "zoom", "anaconda", "vscode", "sketch", "pycharm"];
const DOCK_BARE = ["contacts", "wallet", "anaconda", "sketch", "pycharm", "textedit", "mini1", "mini2", "mini3", "trash"];

function DockItem({ name, dot }: { name: string; dot: boolean }) {
  const bare = DOCK_BARE.includes(name);
  return (
    <div className="relative flex w-[56px] flex-col items-center">
      <div className={"h-[56px] w-[56px] " + (bare ? "" : "overflow-hidden rounded-[13px]")}>
        <DockGlyph name={name} />
      </div>
      {name === "prefs" && (
        <span className="absolute right-[-5px] top-[-7px] flex h-[25px] w-[25px] items-center justify-center rounded-full bg-[#e5493a] text-[16px] text-white [font-family:Inter,sans-serif]">
          1
        </span>
      )}
      <span className={"mt-[10px] h-[7px] w-[6px] rounded-full " + (dot ? "bg-[#b89aa6]" : "")} />
    </div>
  );
}

function Dock() {
  return (
    <div className="absolute left-[58px] top-[1862px] flex h-[92px] w-[2908px] gap-[18.5px] rounded-[22px] border-2 border-[#584a4d] bg-[linear-gradient(90deg,#1d1d23_0%,#2a2229_35%,#3a242e_55%,#3e2329_75%,#4e2318_100%)] pl-[11px] pt-[14px]">
      {DOCK_LEFT.map(([n, d]) => (
        <DockItem key={n} name={n} dot={d === 1} />
      ))}
      <div className="mx-[9px] my-[-1px] h-[68px] w-px bg-[#6a5a5e]" />
      {DOCK_APPS.map((n) => (
        <DockItem key={n} name={n} dot />
      ))}
      <div className="ml-[9px] mr-[1px] my-[-1px] h-[68px] w-px bg-[#6a5a5e]" />
      <DockItem name="mini1" dot={false} />
      <DockItem name="mini2" dot={false} />
      <DockItem name="mini3" dot={false} />
      <div className="ml-[2px]">
        <DockItem name="trash" dot={false} />
      </div>
    </div>
  );
}

function NotificationOverlay() {
  return (
    <>
      <div className="absolute left-[2304px] top-[105px] h-[132px] w-[679px] rounded-[10px] border border-[#1a1a1a] bg-black/80 [font-family:Inter,sans-serif]">
        <div className="absolute left-[24px] top-[21px] flex h-[53px] w-[53px] items-center justify-center rounded-full border-2 border-[#a5c4ee] bg-[#5b8ed6] text-[26px] text-white">
          i
        </div>
        <div className="absolute left-[93px] top-[14px] text-[24.7px] font-bold text-[#d8d8d8]">Salman is the host now</div>
      </div>
      <div className="absolute left-[2324px] top-[78px] flex h-[35px] w-[214px] items-center justify-center rounded-[2px] border border-[#4a4644] bg-[#2a2725] text-[22.5px] text-[#f2f2f2] [font-family:Inter,sans-serif]">
        Microsoft Outlook
      </div>
    </>
  );
}

export default function App() {
  return (
    <div className="relative h-[1964px] w-[3024px] overflow-hidden bg-[linear-gradient(90deg,#020d17_0%,#020d17_21%,#380c2a_35%,#3f1024_55%,#5c1d20_75%,#8a3219_100%)] font-medium [font-family:Lato,sans-serif]">
      <MenuBar />

      {/* anaconda navigator behind chrome */}
      <div className="absolute left-0 top-[76px] h-[1774px] w-[3024px] rounded-[20px] bg-[#efefef]">
        <div className="flex h-[57px] items-center rounded-t-[20px] border-b-2 border-t-2 border-b-black border-t-[#5a4f4b] bg-[#352a28] pl-[16px]">
          <span className="h-[24px] w-[24px] rounded-full bg-[#5b5350]" />
          <span className="ml-[16px] h-[24px] w-[24px] rounded-full bg-[#5b5350]" />
          <span className="ml-[16px] h-[24px] w-[24px] rounded-full bg-[#5b5350]" />
          <span className="ml-[1261px] text-[26px] font-bold text-[#7a716e] [font-family:Inter,sans-serif]">Anaconda Navigator</span>
        </div>
        <div className="absolute left-[77px] top-[77px] h-[61px] w-[61px] rounded-full bg-[#43a832]" />
        <div className="absolute left-[2747px] top-[78px] h-[80px] w-[218px] rounded-[24px] bg-[#27a345]" />
      </div>
      {/* other dark windows */}
      <div className="absolute left-[318px] top-[158px] h-[100px] w-[2400px] rounded-t-[20px] border-t-2 border-[#5a4f4b] bg-[#2f2725]" />
      <div className="absolute left-0 top-[197px] h-[1195px] w-[3024px] rounded-[18px] border-2 border-[#3c3835] bg-[#0b0b0b]" />

      {/* chrome window */}
      <div className="absolute left-[22px] top-[170px] flex h-[1727px] w-[2983px] flex-col overflow-hidden rounded-[20px] border-t-2 border-[#55565a] bg-[#202124] shadow-[0_0_24px_rgba(0,0,0,.65)]">
        <TabStrip />
        <Toolbar />
        <div className="h-[6px] shrink-0 border-t-2 border-[#202124] bg-[linear-gradient(90deg,#ee6a5e,#f2a067_50%,#fbeb87)]" />
        <div className="flex min-h-0 flex-1">
          <Sidebar />
          <MainPanel />
        </div>
      </div>

      <NotificationOverlay />
      <Dock />
    </div>
  );
}
